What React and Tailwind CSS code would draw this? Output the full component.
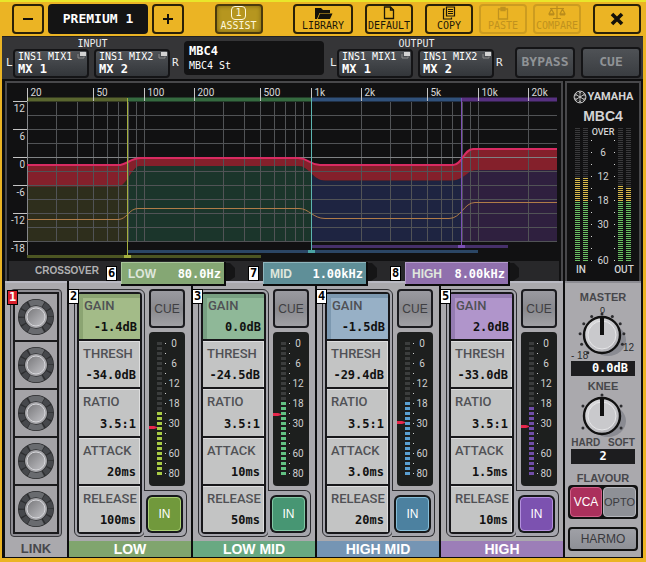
// src/App.jsx - Premium rack, MBC4 multiband compressor

import React, { useState } from 'react';

const BANDS = [
  {
    id: 2, name: 'LOW', gain: '-1.4dB', thresh: '-34.0dB', ratio: '3.5:1', attack: '20ms', release: '100ms',
    lit: 13, mark: 95, led: '#a9cc45', gainClass: 'bg-[#a3bb88] border-[#8ba472]', nameClass: 'bg-[#80a56e]',
    inClass: 'bg-[#71993c] border-[#a9cf72]',
  },
  {
    id: 3, name: 'LOW MID', gain: '0.0dB', thresh: '-24.5dB', ratio: '3.5:1', attack: '10ms', release: '50ms',
    lit: 15, mark: 82, led: '#62c283', gainClass: 'bg-[#8fb898] border-[#789f82]', nameClass: 'bg-[#69a982]',
    inClass: 'bg-[#479673] border-[#82c8a5]',
  },
  {
    id: 4, name: 'HIGH MID', gain: '-1.5dB', thresh: '-29.4dB', ratio: '3.5:1', attack: '3.0ms', release: '20ms',
    lit: 15, mark: 90, led: '#5a9fd2', gainClass: 'bg-[#97b0c6] border-[#7c98b0]', nameClass: 'bg-[#7595b4]',
    inClass: 'bg-[#4c81a0] border-[#85bdd8]',
  },
  {
    id: 5, name: 'HIGH', gain: '2.0dB', thresh: '-33.0dB', ratio: '3.5:1', attack: '1.5ms', release: '10ms',
    lit: 14, mark: 94, led: '#704da8', gainClass: 'bg-[#b095cb] border-[#957cb2]', nameClass: 'bg-[#9c7eb8]',
    inClass: 'bg-[#7c52b0] border-[#b390dd]',
  },
];

const CROSSOVERS = [
  { id: 6, name: 'LOW', value: '80.0Hz', boxClass: 'bg-[#85a774] border-[#a9c59b]' },
  { id: 7, name: 'MID', value: '1.00kHz', boxClass: 'bg-[#5f8f98] border-[#8fb6bd]' },
  { id: 8, name: 'HIGH', value: '8.00kHz', boxClass: 'bg-[#9070ad] border-[#b49bcb]' },
];

const mono = "font-['DejaVu_Sans_Mono','Liberation_Mono',monospace]";
const roboto = 'font-[Roboto,sans-serif]';

/* ---------- Header ---------- */

const HeaderButton = ({ label, icon, wide, disabled }) => (
  <button
    disabled={disabled}
    className={`${wide ? 'w-15' : 'w-12'} h-[30px] flex flex-col items-center justify-end rounded border-2 pb-px ${mono} text-[10px] leading-[11px] ${
      disabled ? 'border-[#cc9c20] text-[#c0921e]' : 'border-[#2a2108] text-[#1c1708]'
    }`}
  >
    {icon}
    <span>{label}</span>
  </button>
);

const FolderIcon = () => (
  <svg width="22" height="14" viewBox="0 0 22 14" fill="#14110a">
    <path d="M3 13V2h6l2 2h7v3H7.500L5 13z" />
    <path d="M8 7.500h12.500L18 13H5.800z" />
  </svg>
);

const PageIcon = () => (
  <svg width="14" height="14" viewBox="0 0 14 14" fill="none" stroke="#1c1708" strokeWidth="1.300">
    <path d="M2.500 1h6l3 3v8.500h-9z" />
    <path d="M8.500 1v3h3" />
  </svg>
);

const CopyIcon = () => (
  <svg width="14" height="14" viewBox="0 0 14 14" fill="none" stroke="#1c1708" strokeWidth="1.200">
    <path d="M4.500 1h8v9h-8z" />
    <path d="M3 3H1.500v10h8V11.500" />
    <path d="M6 3.500h5M6 5.500h5M6 7.500h5" />
  </svg>
);

const PasteIcon = () => (
  <svg width="14" height="14" viewBox="0 0 14 14" fill="none" stroke="#c0921e" strokeWidth="1.300">
    <path d="M2.500 3h9v10h-9z" />
    <path d="M5 1.500h4v3H5z" fill="#c0921e" />
  </svg>
);

const ScaleIcon = () => (
  <svg width="18" height="14" viewBox="0 0 18 14" fill="none" stroke="#b98c1c" strokeWidth="1.200">
    <path d="M9 0v12M5 12.500h8M2 2.500h14" />
    <path d="M3.500 3L1 8h5zM14.500 3L12 8h5z" />
    <path d="M1 8.500h5M12 8.500h5" strokeWidth="2" />
  </svg>
);

const Header = () => {
  const [assist, setAssist] = useState(true);

  return (
    <header className="flex items-center justify-between h-[34px] pl-[10px] pr-0.5">
      <div className="flex gap-1">
        <button aria-label="Previous" className="w-8 h-[30px] flex items-center justify-center rounded border-2 border-[#2a2108]">
          <svg width="12" height="12" viewBox="0 0 12 12"><path d="M1 6h10" stroke="#14110a" strokeWidth="2" /></svg>
        </button>
        <div className={`w-25 h-[30px] flex items-center justify-center rounded-sm bg-[#141414] text-white text-[13px] font-bold ${mono}`}>
          PREMIUM 1
        </div>
        <button aria-label="Next" className="w-8 h-[30px] flex items-center justify-center rounded border-2 border-[#2a2108]">
          <svg width="12" height="12" viewBox="0 0 12 12"><path d="M1 6h10M6 1v10" stroke="#14110a" strokeWidth="2" /></svg>
        </button>
      </div>

      <button
        onClick={() => setAssist(!assist)}
        className={`w-12 h-[30px] flex flex-col items-center justify-end rounded border-2 border-[#4a3a0c] pb-px text-[#fdf8dc] text-[10px] leading-[11px] ${mono} ${
          assist ? 'bg-[#b6961f] shadow-[inset_0_0_4px_#7c6412]' : 'bg-[#ebb424]'
        }`}
      >
        <span className="w-[15px] h-[14px] rounded border border-[#fdf8dc] leading-[12px]">1</span>
        <span>ASSIST</span>
      </button>

      <div className="flex gap-3">
        <HeaderButton label="LIBRARY" icon={<FolderIcon />} wide />
        <HeaderButton label="DEFAULT" icon={<PageIcon />} />
        <div className="flex gap-[6px]">
          <HeaderButton label="COPY" icon={<CopyIcon />} />
          <HeaderButton label="PASTE" icon={<PasteIcon />} disabled />
          <HeaderButton label="COMPARE" icon={<ScaleIcon />} disabled />
        </div>
        <button aria-label="Close" className="w-12 h-[30px] flex items-center justify-center rounded border-2 border-[#2a2108]">
          <svg width="14" height="14" viewBox="0 0 14 14"><path d="M2 2l10 10M12 2L2 12" stroke="#14110a" strokeWidth="3.600" /></svg>
        </button>
      </div>
    </header>
  );
};

/* ---------- Input / output row ---------- */

const PatchButton = ({ top, bottom }) => (
  <button className={`w-[76px] h-[29px] rounded border-2 border-[#141416] bg-linear-to-b from-[#505357] to-[#33363a] pl-[3px] pr-px pb-px text-left text-white ${mono}`}>
    <span className="flex justify-between text-[10px] leading-[12px]">
      {top}
      <svg width="9" height="8" viewBox="0 0 9 8">
        <path d="M3 1h6v4H3z" fill="#d2d2d2" />
        <path d="M1 3v4h6V5.500" fill="none" stroke="#8c8c8c" />
      </svg>
    </span>
    <span className="block text-[12px] leading-[12px] font-bold">{bottom}</span>
  </button>
);

const PatchGroup = ({ title }) => (
  <div className="flex flex-col items-center text-[#ededed]">
    <span className={`text-[10px] leading-[11px] ${mono}`}>{title}</span>
    <div className={`flex items-center text-[11px] ${mono}`}>
      <span className="w-[7px]">L</span>
      <div className="flex gap-[5px]">
        <PatchButton top="INS1 MIX1" bottom="MX 1" />
        <PatchButton top="INS1 MIX2" bottom="MX 2" />
      </div>
      <span className="pl-0.5 w-[9px]">R</span>
    </div>
  </div>
);

const DarkButton = ({ label }) => (
  <button className={`w-15 h-[31px] mt-2 rounded border-2 border-[#141416] bg-linear-to-b from-[#4f5256] to-[#3a3d41] text-[#909396] text-[13px] font-bold ${mono}`}>
    {label}
  </button>
);

const PatchRow = () => (
  <div className="flex items-center h-[43px] pl-1 pr-0.5 bg-[#353537] border-t border-[#222]">
    <PatchGroup title="INPUT" />
    <div className={`flex-1 h-[34px] ml-[5px] mr-[6px] rounded-sm bg-[#131314] pl-[5px] pt-0.5 text-white ${mono}`}>
      <p className="text-[12px] leading-[16px] font-bold">MBC4</p>
      <p className="text-[10px] leading-[14px]">MBC4 St</p>
    </div>
    <PatchGroup title="OUTPUT" />
    <div className="flex gap-[6px] ml-3">
      <DarkButton label="BYPASS" />
      <DarkButton label="CUE" />
    </div>
  </div>
);

/* ---------- Frequency graph ---------- */

// frequency / level to graph coordinates
const fx = (f) => Math.round(20 + 167 * Math.log10(f / 20)) + 0.5;
const dy = (db) => Math.round(74 - (db * 14) / 3) + 0.5;

const GRID_F = [
  30, 40, 50, 60, 70, 80, 90, 100, 200, 300, 400, 500, 600, 700, 800, 900,
  1000, 2000, 3000, 4000, 5000, 6000, 7000, 8000, 9000, 10000, 20000,
];
const GRID_DB = [9, 6, 3, 0, -3, -6, -9, -12, -15, -18];
const LABEL_F = [
  [20, '20'], [50, '50'], [100, '100'], [200, '200'], [500, '500'],
  [1000, '1k'], [2000, '2k'], [5000, '5k'], [10000, '10k'], [20000, '20k'],
];
const LABEL_DB = [12, 6, 0, -6, -12, -18];

const OUTPUT_CURVE = 'M20 82h91C120 82 123 75 134 75H291C302 75 302 82 313 82H446C455 82 457 66 466 66H550';

const Graph = () => (
  <svg viewBox="0 0 554 178" className={`block w-full ${roboto}`}>
    <path d="M20 103h91C120 103 125 83 133 83H291C302 83 306 97.500 318 97.500H446C454 97.500 460 87 470 87H550V159H20z" fill="#1b352b" />
    <path d="M20 103h91Q115 103 120.500 94V159H20z" fill="#2e2e1c" />
    <path d="M304.500 91Q310 97.500 318 97.500H446Q450 97.500 454.500 94V159H304.500z" fill="#1e2441" />
    <path d="M454.500 94Q460 87 470 87H550V159H454.500z" fill="#2f203f" />
    <path d={`${OUTPUT_CURVE}V87H470Q464 87 460 91Q452 97 446 97.500H318C306 97.500 302 83 291 83H133C125 83 120 103 111 103.500H20Z`} fill="#84202b" />

    {GRID_F.map((f) => (
      <path key={f} d={`M${fx(f)} 19V159`} stroke="#515356" />
    ))}
    {GRID_DB.map((db) => (
      <path key={db} d={`M20 ${dy(db)}H550`} stroke={db === 0 ? '#808284' : '#515356'} />
    ))}
    <path d="M20.500 7V173" stroke="#85878a" />

    <path d="M20 16.500H120" stroke="#59652f" strokeWidth="4" />
    <path d="M120 16.500H304" stroke="#356a40" strokeWidth="4" />
    <path d="M304 16.500H454" stroke="#30517b" strokeWidth="4" />
    <path d="M454 16.500H550" stroke="#573181" strokeWidth="4" />

    {LABEL_F.map(([f, text]) => (
      <g key={f}>
        <path d={`M${fx(f)} 5V18`} stroke="#c4c4c4" />
        <text x={fx(f) + 3} y="13" fontSize="10" fill="#d8d8d8">{text}</text>
      </g>
    ))}
    {LABEL_DB.map((db) => (
      <g key={db}>
        <path d={`M6 ${dy(db)}H20`} stroke="#c4c4c4" />
        <text x="18" y={dy(db) + 10} fontSize="10" fill="#d8d8d8" textAnchor="end">{db}</text>
      </g>
    ))}

    <path d={OUTPUT_CURVE} fill="none" stroke="#d92b62" strokeWidth="2" />
    <path d="M20 136.500h91C120 136.500 122 125.500 131 125.500H292C302 125.500 306 135.500 318 135.500H442C454 135.500 457 119.500 468 119.500H550" fill="none" stroke="#b07c48" />

    <path d="M305 163.500H501" stroke="#46306a" strokeWidth="3" />
    <path d="M121 168.500H471" stroke="#2b4665" strokeWidth="3" />
    <path d="M20 173.500H254" stroke="#4c5522" strokeWidth="3" />

    <path d="M120.500 15V173" stroke="#a4b03e" />
    <path d="M117 173.500h7" stroke="#a4b03e" strokeWidth="3" />
    <path d="M304.500 15V168" stroke="#5cb4b0" />
    <path d="M301 168.500h7" stroke="#4aa3a3" strokeWidth="3" />
    <path d="M454.500 15V163" stroke="#7c50b4" />
    <path d="M451 163.500h7" stroke="#7c50b4" strokeWidth="3" />
  </svg>
);

const Badge = ({ children, red }) => (
  <span
    className={`w-[11px] h-[15px] border border-black text-center text-[12px] leading-[13px] font-bold ${mono} ${
      red ? 'bg-[#d8202c] text-white' : 'bg-white text-black'
    }`}
  >
    {children}
  </span>
);

const CrossoverBar = () => (
  <div className="flex items-start h-5 mx-0.5 bg-[#28282a]">
    <span className="flex-1 pl-[26px] pt-[3px] text-[10px] leading-[14px] font-bold text-[#b0b0b2]">CROSSOVER</span>
    <div className="flex gap-[13px] pr-[40px]">
      {CROSSOVERS.map((c) => (
        <div key={c.id} className="flex items-start">
          <span className="flex pt-[5px] pr-1"><Badge>{c.id}</Badge></span>
          <button className={`relative z-10 flex items-center justify-between w-[103px] h-[22px] mt-px border-t border-l ${c.boxClass} pl-[6px] pr-[3px] shadow-[1px_1px_0_1px_#0c0c0c]`}>
            <span className="text-[12px] font-bold text-[#dfe6dc]">{c.name}</span>
            <span className={`text-[12px] font-bold text-white ${mono}`}>{c.value}</span>
          </button>
          <svg width="11" height="20" viewBox="0 0 11 20"><path d="M0 2l6 0l5 5v9l-6 4H0z" fill="#151516" /></svg>
        </div>
      ))}
    </div>
  </div>
);

/* ---------- Level meter ---------- */

const LEVEL_BARS = [[10.5, 53], [18.5, 53], [53.5, 61], [61.5, 63]];
const LEVEL_LABELS = [['6', 31], ['12', 55], ['18', 79], ['30', 103], ['60', 139]];

const LevelMeter = () => (
  <section className="w-[76px] border-2 border-b-0 border-[#48484b] bg-[#111112] text-[#d4d4d4]">
    <div className="flex items-center justify-center gap-px pt-[7px] h-5">
      <svg width="14" height="14" viewBox="0 0 14 14" fill="none" stroke="#d4d4d4">
        <circle cx="7" cy="7" r="5.900" />
        <path d="M7 2v10M2.700 4.500l8.600 5M11.300 4.500l-8.600 5" strokeWidth=".9" />
        <path d="M5.600 3.200L7 2l1.400 1.200M2.800 6.300l-.2-1.900 1.800-.6M11.200 6.300l.2-1.900-1.800-.6M5.600 10.800L7 12l1.400-1.200M2.800 7.700l-.2 1.900 1.800.6M11.200 7.700l.2 1.900-1.800.6" strokeWidth=".7" />
      </svg>
      <span className={`text-[11px] leading-[14px] font-bold ${roboto}`}>YAMAHA</span>
    </div>
    <p className="h-[22px] pt-[6px] text-center text-[14px] leading-[14px] font-bold">MBC4</p>
    <svg viewBox="0 0 72 150" className={`block w-full ${roboto}`} fill="#d4d4d4" fontSize="11" textAnchor="middle">
      {LEVEL_BARS.map(([x, top]) => (
        <g key={x} strokeWidth="5" strokeDasharray="1 1">
          <path d={`M${x} 3V${top}`} stroke="#3a3a3c" />
          <path d={`M${x} ${top}V77`} stroke="#d6b84a" />
          <path d={`M${x} 77V137`} stroke="#69bf62" />
        </g>
      ))}
      {[15, 27, 39, 51, 63, 75, 87, 99, 111, 123, 135].map((y) => (
        <g key={y}>
          <rect x="24" y={y} width="1" height="1" />
          <rect x="47" y={y} width="1" height="1" />
        </g>
      ))}
      <text x="36" y="10" fontSize="9" fontWeight="500">OVER</text>
      {LEVEL_LABELS.map(([text, y]) => (
        <text key={text} x="36" y={y} fontSize="10">{text}</text>
      ))}
      <text x="14" y="148" fontSize="10" fontWeight="500">IN</text>
      <text x="57" y="148" fontSize="10" fontWeight="500">OUT</text>
    </svg>
  </section>
);

/* ---------- Link column ---------- */

const LinkKnob = () => (
  <svg width="38" height="38" viewBox="0 0 38 38">
    <defs>
      <linearGradient id="cap" x1="0" y1="0" x2="1" y2="1">
        <stop offset="0" stopColor="#77777a" />
        <stop offset="1" stopColor="#c2c2c6" />
      </linearGradient>
    </defs>
    <circle cx="19" cy="19" r="18" fill="#2c2d2f" />
    <circle cx="19" cy="19" r="14.500" fill="none" stroke="#46484c" strokeWidth="5.500" strokeDasharray="6.300 1.300" />
    <circle cx="19" cy="19" r="14.500" fill="none" stroke="#696b6f" strokeWidth="5.500" strokeDasharray="14 77.100" strokeDashoffset="-61.300" />
    <circle cx="19" cy="19" r="14.500" fill="none" stroke="#696b6f" strokeWidth="5.500" strokeDasharray="14 77.100" strokeDashoffset="-15.800" />
    <circle cx="19" cy="19" r="11" fill="#a2a2a6" />
    <circle cx="19" cy="19" r="9" fill="url(#cap)" stroke="#d6d6da" />
  </svg>
);

const LinkColumn = () => (
  <section className="relative w-[62px] shrink-0 flex flex-col bg-[#aaa9ad] border-t-2 border-[#b9b9c2]">
    <div className="flex-1 mt-[6px] mx-[5px] mb-1 rounded border border-[#38383b] bg-[#8e8d93] p-[2px]">
      <div className="h-full flex flex-col gap-0.5 border-2 border-[#1a1a1c] bg-[#1a1a1c]">
        {['GAIN', 'THRESH', 'RATIO', 'ATTACK', 'RELEASE'].map((name) => (
          <button key={name} aria-label={`Link ${name}`} className="flex-1 flex items-center justify-center bg-[#a4a3a7]">
            <LinkKnob />
          </button>
        ))}
      </div>
    </div>
    <p className="h-4 text-center text-[13px] leading-[16px] font-bold text-[#47474b]">LINK</p>
    <span className="absolute left-0.5 top-[7px] flex"><Badge red>1</Badge></span>
  </section>
);

/* ---------- Band columns ---------- */

const BAND_LABELS = [['0', 14], ['6', 34], ['12', 54], ['18', 74], ['30', 94], ['60', 124], ['80', 144]];

const BandMeter = ({ lit, mark, led }) => (
  <svg width="36" height="154" viewBox="0 0 36 154" className={`block mr-0.5 rounded-sm bg-[#1d1f1e] ${roboto}`}>
    {Array.from({ length: 27 }, (_, i) => (
      <rect key={i} x="8" y={10 + i * 5} width="5" height="3" fill={i >= 27 - lit ? led : '#3b3d3d'} />
    ))}
    {Array.from({ length: 14 }, (_, i) => (
      <rect key={i} x="16" y={11 + i * 10} width="1" height="1" fill="#d0d0d0" />
    ))}
    {BAND_LABELS.map(([text, y]) => (
      <text key={text} x="25" y={y + 1} fontSize="10" fill="#d0d0d0" textAnchor="middle">{text}</text>
    ))}
    <path d={`M0 ${mark - 1}h5l3 1v1l-3 1H0z`} fill="#e8264c" />
  </svg>
);

const Param = ({ label, value, className }) => (
  <button className={`flex-1 flex flex-col justify-between pr-px pb-[5px] text-left ${className}`}>
    <span className={`block text-[13px] leading-[15px] font-medium text-[#505155] ${roboto}`}>{label}</span>
    <span className={`block w-full pr-0.5 text-right text-[12px] leading-[14px] font-bold text-[#111] ${mono}`}>{value}</span>
  </button>
);

const paramClass = 'pl-1 pt-1 bg-[#c3c4c4] border-t border-r border-[#dededf]';

const Band = ({ band }) => {
  const [on, setOn] = useState(true);

  return (
    <section className="relative flex-1 min-w-0 flex flex-col bg-[#aaa9ad] border-t-2 border-[#b9b9c2]">
      <div className="flex-1 flex pt-[6px] pl-[5px] pr-1 pb-1">
        <div className="flex-1 min-w-0 flex rounded-md border border-[#2c2c30] bg-[#a5a5ac] p-[2px]">
          <div className="flex-1 min-w-0 flex flex-col gap-0.5 border-2 border-[#17171a] bg-[#17171a] rounded-sm">
            <Param label="GAIN" value={band.gain} className={`border-t-4 border-l-4 pl-px ${band.gainClass}`} />
            <Param label="THRESH" value={band.thresh} className={paramClass} />
            <Param label="RATIO" value={band.ratio} className={paramClass} />
            <Param label="ATTACK" value={band.attack} className={paramClass} />
            <Param label="RELEASE" value={band.release} className={paramClass} />
          </div>
        </div>
        <div className="flex flex-col items-end gap-1 -ml-px">
          <button className="w-9 h-[39px] mr-0.5 rounded border-2 border-[#1b1b1f] bg-linear-to-b from-[#9a9aa0] via-[#89898e] to-[#a0a0a4] text-[12px] text-[#3e3e42]">
            CUE
          </button>
          <BandMeter lit={band.lit} mark={band.mark} led={band.led} />
          <div className="w-[43px] flex-1 flex items-center justify-start rounded-r-md border border-l-0 border-[#2c2c30] bg-[#a5a5ac]">
            <button
              onClick={() => setOn(!on)}
              className={`w-[33px] h-[34px] ml-1 rounded-sm border text-[12px] text-white shadow-[0_0_0_2px_#16181a] ${
                on ? band.inClass : 'bg-[#8f8f95] border-[#b9b9c2]'
              }`}
            >
              IN
            </button>
          </div>
        </div>
      </div>
      <p className={`h-4 text-center text-[14px] leading-[16px] font-bold text-white ${band.nameClass}`}>{band.name}</p>
      <span className="absolute -left-px top-[6px] flex"><Badge>{band.id}</Badge></span>
    </section>
  );
};

/* ---------- Master column ---------- */

const BigKnob = ({ id, dots, viewBox, height, children }) => (
  <svg width="74" height={height} viewBox={viewBox} fill="#2c2c2f" fontSize="11" className="block">
    <defs>
      <linearGradient id={id} x1="0" y1="0" x2="1" y2="1">
        <stop offset="0" stopColor="#e4e4e6" />
        <stop offset="1" stopColor="#a9a9ae" />
      </linearGradient>
    </defs>
    <ellipse cx="42" cy="36" rx="18" ry="16" fill="#8a8b92" />
    <circle cx="36" cy="31" r="18" fill={`url(#${id})`} stroke="#111" strokeWidth="2.400" />
    <circle cx="36" cy="31" r="14" fill="#c9c9cc" stroke="#e6e6e8" />
    <path d="M36 31V13" stroke="#111" strokeWidth="4" />
    {dots.map((deg) => {
      const a = (deg * Math.PI) / 180;
      return <circle key={deg} cx={36 + 22 * Math.sin(a)} cy={32 - 22 * Math.cos(a)} r="1.500" />;
    })}
    {children}
  </svg>
);

const MasterColumn = () => {
  const [flavour, setFlavour] = useState('VCA');
  const heading = 'text-center text-[11px] leading-[13px] font-bold text-[#47474b]';
  const readout = `h-[15px] mx-[5px] bg-[#1d1d1f] text-[12px] leading-[15px] font-bold text-white ${mono}`;

  return (
    <section className="w-[76px] shrink-0 flex flex-col bg-[#aaa9ad] border-t-2 border-[#8c8c92] px-px">
      <p className={`${heading} pt-2`}>MASTER</p>
      <BigKnob id="master" viewBox="0 0 74 57" height="57" dots={[-140, -112, -84, -56, -28, 0, 28, 56, 84, 112]}>
        <text x="34" y="9" fontSize="9">0</text>
        <text x="57" y="47" fontSize="10">12</text>
        <text x="5" y="55" fontSize="10">- 18</text>
      </BigKnob>
      <p className={`${readout} text-right pr-[7px]`}>0.0dB</p>
      <p className={`${heading} pt-1`}>KNEE</p>
      <BigKnob id="knee" viewBox="0 8 74 46" height="46" dots={[-120, -60, 0, 60, 120]} />
      <div className="flex justify-center gap-2 -mt-0.5 text-[10px] leading-[12px] font-bold text-[#47474b]">
        <span>HARD</span>
        <span>SOFT</span>
      </div>
      <p className={`${readout} text-center`}>2</p>
      <p className={`${heading} pt-2`}>FLAVOUR</p>
      <div className="flex h-[34px] mx-0.5 rounded bg-[#111] p-0.5 gap-px text-[12px]">
        {['VCA', 'OPTO'].map((name) => (
          <button
            key={name}
            onClick={() => setFlavour(name)}
            className={`flex-1 rounded-sm border ${
              flavour === name ? 'bg-[#ab305c] border-[#d06088] text-white' : 'bg-[#8e9096] border-[#b4b5bb] text-[#3b3b3f] text-[11px]'
            }`}
          >
            {name}
          </button>
        ))}
      </div>
      <button className="h-6 mx-0.5 mt-2 rounded border-2 border-[#111] bg-linear-to-b from-[#9fa0a6] to-[#8e9096] text-[12px] leading-[14px] text-[#38383c]">
        HARMO
      </button>
    </section>
  );
};

const App = () => {
  return (
    <div className="min-h-screen bg-[#ebb424] border-t-2 border-[#e9e62b] pl-0.5 pr-[3px] pb-1 font-['Liberation_Sans',Arial,sans-serif]">
      <Header />
      <main className="bg-[#0d0d0e] pb-px">
        <PatchRow />
        <div className="pl-[3px] pr-0.5 pt-0.5">
          <div className="flex gap-0.5">
            <section className="flex-1 border-2 border-b-0 border-[#48484b] bg-[#111112]">
              <Graph />
              <CrossoverBar />
            </section>
            <LevelMeter />
          </div>
          <div className="flex gap-0.5 h-[276px]">
            <LinkColumn />
            {BANDS.map((band) => (
              <Band key={band.id} band={band} />
            ))}
            <MasterColumn />
          </div>
        </div>
      </main>
    </div>
  );
};

export default App;
